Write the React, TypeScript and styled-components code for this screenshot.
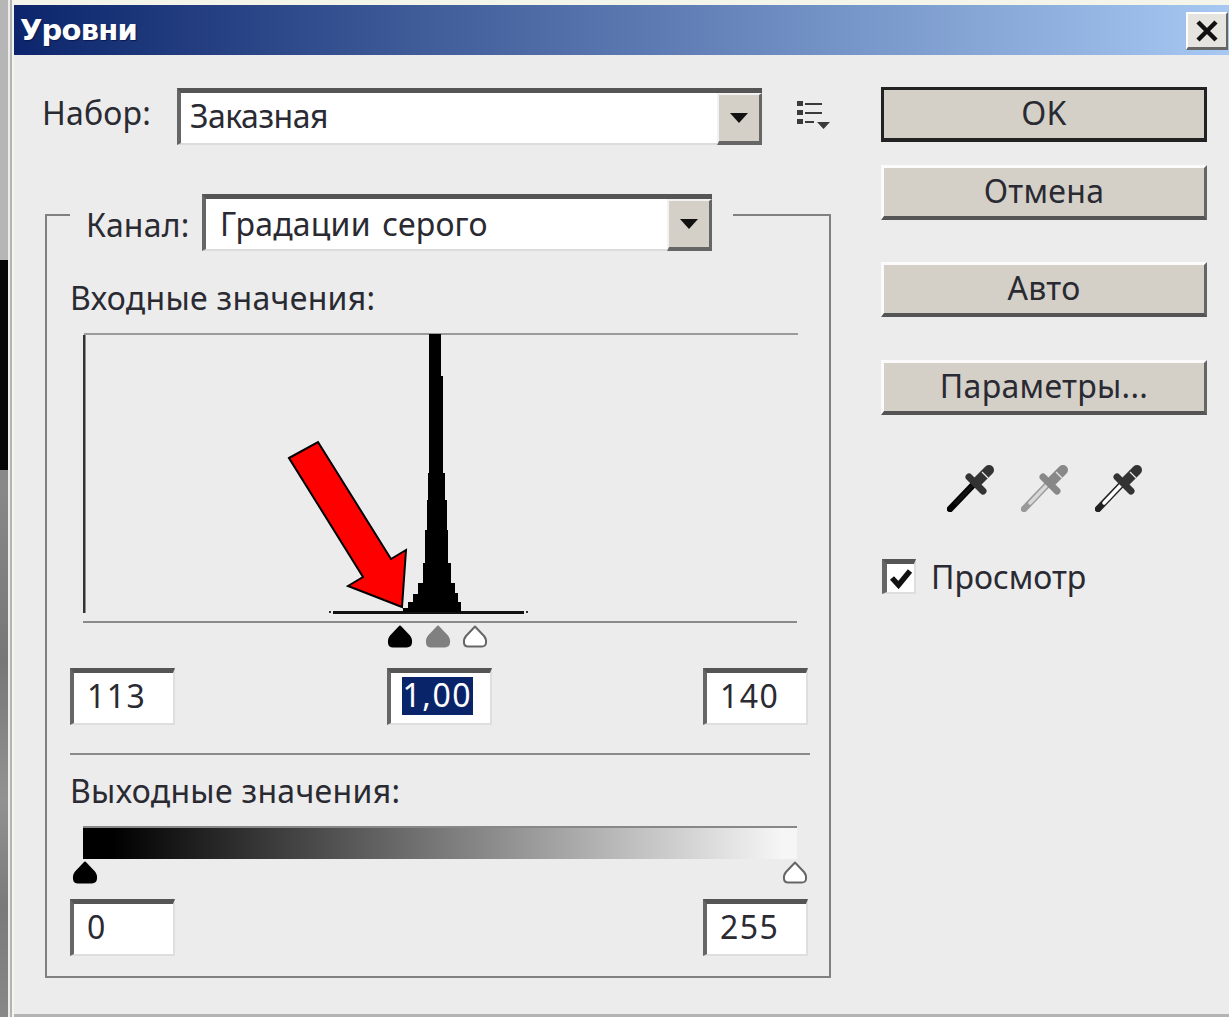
import React from "react";
import styled, { createGlobalStyle } from "styled-components";

const GlobalStyle = createGlobalStyle`
  html, body { margin: 0; padding: 0; background: #ececec; }
  #root { width: 1229px; height: 1017px; overflow: hidden; }
  * { box-sizing: border-box; }
`;

const Screen = styled.div`
  display: flex;
  width: 1229px;
  height: 1017px;
  font-family: "Noto Sans", "DejaVu Sans", sans-serif;
  font-size: 32px;
  color: #2a2a32;
`;

/* Sliver of the desktop that shows to the left of the window */
const Desktop = styled.div`
  display: flex;
  flex-direction: column;
  width: 8px;
  flex: none;
`;

const DesktopBand = styled.div<{ $h: number; $bg: string }>`
  height: ${(p) => p.$h}px;
  flex: ${(p) => (p.$h ? "none" : "1")};
  background: ${(p) => p.$bg};
`;

const Window = styled.div`
  flex: 1;
  display: flex;
  flex-direction: column;
  padding: 5px 0 0 2px;
  background: #f3f4ea;
  border-left: 2px solid #b4b4b4;
  margin-left: 2px;
  min-width: 0;
`;

const TitleBar = styled.div`
  height: 50px;
  flex: none;
  position: relative;
  display: flex;
  align-items: center;
  padding-left: 6px;
  background: linear-gradient(90deg, #0c256c 0%, #a6c8f2 100%);
  color: #fff;
  font-family: "DejaVu Sans", sans-serif;
  font-weight: 700;
  font-size: 29px;
  letter-spacing: -0.8px;
  text-shadow: 1px 1px 1px #0a1a50;
`;

const CloseButton = styled.div`
  position: absolute;
  right: 1px;
  top: 7px;
  width: 42px;
  height: 38px;
  display: flex;
  align-items: center;
  justify-content: center;
  background: #e6e4de;
  border-top: 2px solid #fff;
  border-left: 2px solid #fff;
  border-right: 2px solid #666;
  border-bottom: 3px solid #666;
`;

const Content = styled.div`
  flex: 1;
  display: flex;
  background: #ececec;
  border-bottom: 3px solid #b4b4b4;
  padding-left: 28px;
  min-height: 0;
`;

const LeftColumn = styled.div`
  width: 839px;
  flex: none;
  display: flex;
  flex-direction: column;
  padding-top: 33px;
`;

const PresetRow = styled.div`
  display: flex;
  align-items: center;
  height: 57px;
`;

const FieldLabel = styled.span<{ $w: number; $shift: number }>`
  width: ${(p) => p.$w}px;
  flex: none;
  letter-spacing: 0.2px;
  line-height: 36px;
  margin-top: ${(p) => p.$shift}px;
`;

const Combo = styled.div<{ $w: number; $pad: number; $spacing: number; $lift: number }>`
  width: ${(p) => p.$w}px;
  height: 57px;
  flex: none;
  display: flex;
  background: #fff;
  border-top: 5px solid #555;
  border-left: 4px solid #666;
  border-bottom: 2px solid #dcdcdc;
  padding-left: ${(p) => p.$pad}px;
  padding-bottom: ${(p) => p.$lift}px;
  align-items: center;
  justify-content: space-between;
  word-spacing: 3px;
  letter-spacing: ${(p) => p.$spacing}px;
`;

const ComboArrow = styled.div<{ $lift: number }>`
  width: 45px;
  align-self: stretch;
  flex: none;
  display: flex;
  align-items: center;
  justify-content: center;
  background: #d4d0c8;
  border-top: 2px solid #f2f2f2;
  border-left: 2px solid #f2f2f2;
  border-right: 3px solid #666;
  border-bottom: 4px solid #666;
  margin-bottom: ${(p) => -2 - p.$lift}px;
`;

const MenuIcon = styled.svg`
  margin-left: 35px;
  margin-top: -3px;
  flex: none;
`;

const ChannelGroup = styled.fieldset`
  margin: 49px 0 0 3px;
  padding: 0 20px 0 23px;
  width: 786px;
  height: 784px;
  border: 2px solid #808080;
  min-width: 0;
`;

const GroupLegend = styled.legend`
  padding: 0 21px 0 16px;
  display: flex;
  align-items: center;
  height: 42px;
  overflow: visible;
`;

const LegendInner = styled.div`
  display: flex;
  align-items: center;
  margin-top: 14px;
`;

const SectionLabel = styled.div<{ $top: number }>`
  margin-top: ${(p) => p.$top}px;
  height: 36px;
  line-height: 36px;
  letter-spacing: 0.3px;
`;

const HistogramChart = styled.svg`
  display: block;
  margin: 17px 0 0 13px;
  overflow: visible;
`;

const ThumbTrack = styled.div<{ $top: number }>`
  position: relative;
  height: 24px;
  width: 710px;
  margin: ${(p) => p.$top}px 0 0 15px;
`;

const Thumb = styled.svg`
  position: absolute;
  top: 0;
  transform: translateX(-13px);
`;

const ValueRow = styled.div<{ $top: number }>`
  display: flex;
  justify-content: space-between;
  width: 738px;
  margin-top: ${(p) => p.$top}px;
`;

const ValueBox = styled.div`
  width: 105px;
  height: 57px;
  display: flex;
  align-items: center;
  padding: 0 0 5px 13px;
  background: #fff;
  border-top: 5px solid #555;
  border-left: 4px solid #666;
  border-right: 2px solid #dedede;
  border-bottom: 2px solid #dedede;
  letter-spacing: 1.5px;
`;

const SelectedText = styled.span`
  background: #0a246a;
  color: #fff;
  height: 38px;
  line-height: 36px;
  padding: 0 1px;
  margin-left: -2px;
`;

const Separator = styled.div`
  height: 2px;
  width: 740px;
  background: #8a8a8a;
  margin-top: 28px;
`;

const OutputRamp = styled.div`
  width: 714px;
  height: 33px;
  margin: 17px 0 0 13px;
  border-top: 2px solid #888;
  background: linear-gradient(90deg, #000 0%, #000 4%, #f6f6f6 98%);
`;

const RightColumn = styled.div`
  width: 326px;
  flex: none;
  display: flex;
  flex-direction: column;
  padding-top: 32px;
`;

const ActionButton = styled.div<{ $top: number; $isDefault?: boolean }>`
  height: 55px;
  margin-top: ${(p) => p.$top}px;
  display: flex;
  align-items: center;
  justify-content: center;
  background: #d4d0c8;
  letter-spacing: 0.3px;
  padding-bottom: 4px;
  border-top: 3px solid ${(p) => (p.$isDefault ? "#222" : "#fbfbfb")};
  border-left: 3px solid ${(p) => (p.$isDefault ? "#222" : "#fbfbfb")};
  border-right: 3px solid ${(p) => (p.$isDefault ? "#222" : "#666")};
  border-bottom: 4px solid ${(p) => (p.$isDefault ? "#222" : "#555")};
`;

const DropperRow = styled.div`
  display: flex;
  gap: 26px;
  margin: 49px 0 0 66px;
`;

const PreviewRow = styled.div`
  display: flex;
  align-items: center;
  margin: 43px 0 0 1px;
`;

const CheckBox = styled.div`
  width: 34px;
  height: 35px;
  flex: none;
  margin-right: 15px;
  display: flex;
  align-items: center;
  justify-content: center;
  background: #fff;
  border-top: 5px solid #555;
  border-left: 5px solid #666;
  border-right: 2px solid #dedede;
  border-bottom: 2px solid #dedede;
`;

/* Levels shown in the dialog, on the 0-255 scale */
const inputLevels = { black: 113, white: 140 };
const gammaLevel = (inputLevels.black + inputLevels.white) / 2 + 0.4;

const toPercent = (level: number) => `${(level / 255) * 100}%`;

const SliderThumb: React.FC<{ level: number; fill: string; stroke: string }> = ({ level, fill, stroke }) => (
  <Thumb width="26" height="24" viewBox="0 0 26 24" style={{ left: toPercent(level) }}>
    <path
      d="M13 1.5 L22 11 Q24.5 14 24 18 Q23.5 21.5 20 21.5 L6 21.5 Q2.5 21.5 2 18 Q1.5 14 4 11 Z"
      fill={fill}
      stroke={stroke}
      strokeWidth="2"
      strokeLinejoin="round"
    />
  </Thumb>
);

const ArrowDown: React.FC = () => (
  <svg width="20" height="12" viewBox="0 0 20 12">
    <path d="M1 1 H19 L10 11 Z" fill="#111" />
  </svg>
);

const Eyedropper: React.FC<{ shaft: string; edge: string; head: string }> = ({ shaft, edge, head }) => (
  <svg width="48" height="48" viewBox="0 0 48 48">
    <path d="M3 45 L26 21" stroke={edge} strokeWidth="6.5" strokeLinecap="round" />
    <path d="M9 39 L26 21" stroke={shaft} strokeWidth="3.5" strokeLinecap="round" />
    <path d="M22 13 L36 27" stroke={head} strokeWidth="7" strokeLinecap="round" />
    <path d="M31 17 L42 6" stroke={head} strokeWidth="10" strokeLinecap="round" />
    <path d="M35 8 L41 14" stroke="#e8e8e8" strokeWidth="1.2" />
  </svg>
);

export default function App() {
  return (
    <Screen>
      <GlobalStyle />
      <Desktop>
        <DesktopBand $h={260} $bg="#b6b6b6" />
        <DesktopBand $h={210} $bg="#050505" />
        <DesktopBand $h={0} $bg="linear-gradient(180deg, #8a8a8a, #777 35%, #929292 60%, #7a7a7a 80%, #888)" />
      </Desktop>
      <Window>
        <TitleBar>
          Уровни
          <CloseButton>
            <svg width="24" height="24" viewBox="0 0 24 24">
              <path d="M3 3 L21 21 M21 3 L3 21" stroke="#111" strokeWidth="4.5" />
            </svg>
          </CloseButton>
        </TitleBar>
        <Content>
          <LeftColumn>
            <PresetRow>
              <FieldLabel $w={135} $shift={-8}>Набор:</FieldLabel>
              <Combo $w={585} $pad={9} $spacing={-0.5} $lift={6}>
                Заказная
                <ComboArrow $lift={6}>
                  <ArrowDown />
                </ComboArrow>
              </Combo>
              <MenuIcon width="34" height="30" viewBox="0 0 34 30">
                <g fill="#3a3a3a">
                  <rect x="0" y="1" width="6" height="5" />
                  <rect x="0" y="10" width="6" height="5" />
                  <rect x="0" y="19" width="6" height="5" />
                  <rect x="8" y="3" width="17" height="2" />
                  <rect x="8" y="12" width="17" height="2" />
                  <rect x="8" y="21" width="9" height="2" />
                  <path d="M20 22 H33 L26.5 29 Z" />
                </g>
              </MenuIcon>
            </PresetRow>

            <ChannelGroup>
              <GroupLegend>
                <LegendInner>
                  <FieldLabel $w={116} $shift={6}>Канал:</FieldLabel>
                  <Combo $w={510} $pad={14} $spacing={0.2} $lift={0}>
                    Градации серого
                    <ComboArrow $lift={0}>
                      <ArrowDown />
                    </ComboArrow>
                  </Combo>
                </LegendInner>
              </GroupLegend>

              <SectionLabel $top={44}>Входные значения:</SectionLabel>

              <HistogramChart width="716" height="290" viewBox="83 333 716 290">
                <rect x="84" y="333" width="714" height="2" fill="#9a9a9a" />
                <rect x="83" y="335" width="2.5" height="278" fill="#333" />
                <rect x="83" y="621" width="714" height="2" fill="#8a8a8a" />
                <rect x="333" y="611" width="191" height="3" fill="#111" />
                <rect x="329" y="611" width="2" height="2" fill="#333" />
                <rect x="526" y="611" width="2" height="2" fill="#333" />
                {/* Tone distribution: a narrow spike around the middle greys, drawn in one-level steps */}
                <path
                  d="M403 612 V608 H408 V602 H413 V594 H418 V583 H423 V563 H425 V530 H427 V500 H428 V473 H429 V334
                     H441 V376 H443 V473 H445 V500 H447 V530 H448 V563 H451 V583 H455 V593 H458 V602 H461 V612 Z"
                  fill="#000"
                />
                {/* Callout arrow pointing at the left foot of the spike */}
                <path
                  d="M289 458 L318 442 L391 559 L406 550 L402 607 L348 586 L363 577 Z"
                  fill="#ff0000"
                  stroke="#000"
                  strokeWidth="2"
                  strokeLinejoin="miter"
                />
              </HistogramChart>

              <ThumbTrack $top={2}>
                <SliderThumb level={inputLevels.black} fill="#000" stroke="#000" />
                <SliderThumb level={gammaLevel} fill="#808080" stroke="#808080" />
                <SliderThumb level={inputLevels.white} fill="#fff" stroke="#666" />
              </ThumbTrack>

              <ValueRow $top={19}>
                <ValueBox>113</ValueBox>
                <ValueBox>
                  <SelectedText>1,00</SelectedText>
                </ValueBox>
                <ValueBox>140</ValueBox>
              </ValueRow>

              <Separator />

              <SectionLabel $top={18}>Выходные значения:</SectionLabel>

              <OutputRamp />

              <ThumbTrack $top={2}>
                <SliderThumb level={0} fill="#000" stroke="#000" />
                <SliderThumb level={255} fill="#fff" stroke="#666" />
              </ThumbTrack>

              <ValueRow $top={14}>
                <ValueBox>0</ValueBox>
                <ValueBox>255</ValueBox>
              </ValueRow>
            </ChannelGroup>
          </LeftColumn>

          <RightColumn>
            <ActionButton $top={0} $isDefault>OK</ActionButton>
            <ActionButton $top={23}>Отмена</ActionButton>
            <ActionButton $top={42}>Авто</ActionButton>
            <ActionButton $top={43}>Параметры...</ActionButton>
            <DropperRow>
              <Eyedropper shaft="#111" edge="#000" head="#333" />
              <Eyedropper shaft="#d8d8d8" edge="#999" head="#888" />
              <Eyedropper shaft="#fff" edge="#222" head="#333" />
            </DropperRow>
            <PreviewRow>
              <CheckBox>
                <svg width="24" height="22" viewBox="0 0 24 22">
                  <path d="M3 11 L9.5 18 L21 4" fill="none" stroke="#111" strokeWidth="5.5" />
                </svg>
              </CheckBox>
              Просмотр
            </PreviewRow>
          </RightColumn>
        </Content>
      </Window>
    </Screen>
  );
}
